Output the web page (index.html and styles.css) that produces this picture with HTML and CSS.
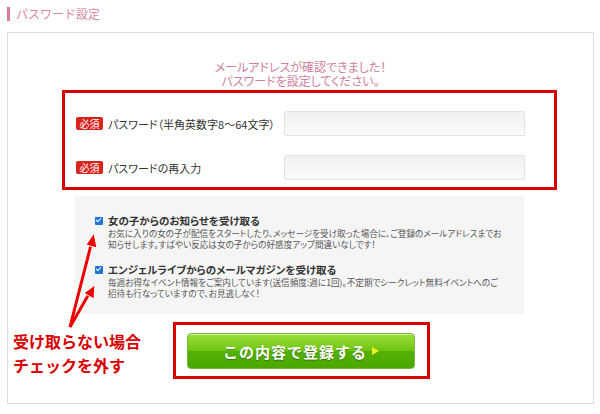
FILE: index.html
```html
<!DOCTYPE html>
<html lang="ja">

<head>
  <meta charset="UTF-8">
  <meta name="viewport" content="width=device-width, initial-scale=1.0">
  <title>パスワード設定</title>
  <link rel="stylesheet" href="styles.css">
</head>

<body>
  <div class="page">
    <h1 class="title">パスワード設定</h1>

    <div class="panel">
      <p class="lead">メールアドレスが確認できました！<br>パスワードを設定してください。</p>

      <div class="mark form-box">
        <div class="row">
          <label class="label"><span class="must">必須</span>パスワード（半角英数字8～64文字）</label>
          <input class="field" type="password">
        </div>
        <div class="row">
          <label class="label"><span class="must">必須</span>パスワードの再入力</label>
          <input class="field" type="password">
        </div>
      </div>

      <div class="notice">
        <div class="item">
          <p class="item-title"><span class="check"></span>女の子からのお知らせを受け取る</p>
          <p class="item-desc">お気に入りの女の子が配信をスタートしたり、メッセージを受け取った場合に、ご登録のメールアドレスまでお知らせします。すばやい反応は女の子からの好感度アップ間違いなしです！</p>
        </div>
        <div class="item">
          <p class="item-title"><span class="check"></span>エンジェルライブからのメールマガジンを受け取る</p>
          <p class="item-desc">毎週お得なイベント情報をご案内しています(送信頻度:週に1回)。不定期でシークレット無料イベントへのご招待も行なっていますので、お見逃しなく！</p>
        </div>
      </div>

      <div class="mark submit-box">
        <button class="submit" type="button">この内容で登録する<span class="tri"></span></button>
      </div>
    </div>

    <!-- 注釈 -->
    <p class="note">受け取らない場合<br>チェックを外す</p>
    <svg class="arrows" width="600" height="414" viewBox="0 0 600 414">
      <g stroke="#fff" stroke-width="5" stroke-linecap="round" fill="none">
        <line x1="70" y1="320" x2="92" y2="234" />
        <line x1="70" y1="320" x2="90" y2="285" />
      </g>
      <g stroke="#e00" stroke-width="3" fill="none">
        <line x1="70" y1="320" x2="92" y2="234" />
        <line x1="70" y1="320" x2="90" y2="285" />
      </g>
      <g fill="#e00" stroke="#fff" stroke-width="1">
        <polygon points="94,226 97,241 86,238" />
        <polygon points="95,278 94,292 84,286" />
      </g>
    </svg>
  </div>
</body>

</html>
```

FILE: styles.css
```css
body,
h1,
p {
  margin: 0;
  padding: 0;
}
body {
  font-family: "Noto Sans CJK JP", "Liberation Sans", sans-serif;
  color: #333;
  background: #fff;
}
.page {
  position: relative;
  width: 600px;
  height: 414px;
}
.title {
  margin: 7px 0 11px 7px;
  padding-left: 6px;
  border-left: 3px solid #e0789a;
  font-size: 12px;
  font-weight: normal;
  line-height: 14px;
  color: #d98aa6;
}
.panel {
  box-sizing: border-box;
  height: 372px;
  margin: 0 6px 0 7px;
  padding-top: 27px;
  border: 1px solid #ddd;
}
.lead {
  font-size: 12px;
  line-height: 14px;
  text-align: center;
  color: #d07f9d;
  font-feature-settings: "palt";
}
.mark {
  border: 3px solid #d90000;
}
.form-box {
  width: 495px;
  box-sizing: border-box;
  margin: 2px 0 0 54px;
  padding: 18px 0 7px 11px;
  display: flex;
  flex-direction: column;
  gap: 19px;
}
.row {
  display: flex;
  align-items: center;
}
.label {
  width: 208px;
  display: flex;
  align-items: center;
  font-size: 11px;
  color: #333;
  font-feature-settings: "palt";
}
.must {
  display: inline-block;
  width: 27px;
  height: 13px;
  margin-right: 5px;
  border-radius: 2px;
  background-color: #d8221c;
  color: #fff;
  font-size: 10px;
  line-height: 13px;
  text-align: center;
}
.field {
  box-sizing: border-box;
  width: 241px;
  height: 25px;
  margin: 0;
  border: 1px solid #e3e3e3;
  border-radius: 2px;
  background: linear-gradient(#f0f0f0, #fbfbfb);
}
.notice {
  box-sizing: border-box;
  width: 449px;
  height: 118px;
  margin: 6px 0 0 67px;
  padding: 18px 22px 0 20px;
  background-color: #f5f5f5;
  display: flex;
  flex-direction: column;
  gap: 14px;
}
.item-title {
  display: flex;
  align-items: center;
  font-size: 10.5px;
  font-weight: bold;
  line-height: 14px;
  color: #333;
  font-feature-settings: "palt";
}
.check {
  position: relative;
  width: 8px;
  height: 8px;
  margin-right: 5px;
  border-radius: 1px;
  background-color: #1f74d6;
}
.check::after {
  content: "";
  position: absolute;
  left: 2px;
  top: 0;
  width: 2px;
  height: 4px;
  border: solid #fff;
  border-width: 0 1px 1px 0;
  transform: rotate(45deg);
}
.item-desc {
  padding-left: 13px;
  font-size: 8.6px;
  line-height: 10.5px;
  color: #555;
  font-feature-settings: "palt";
}
.submit-box {
  box-sizing: border-box;
  width: 257px;
  margin: 8px 0 0 165px;
  padding: 8px 0 7px 11px;
}
.submit {
  box-sizing: border-box;
  width: 228px;
  height: 36px;
  border: 1px solid #78b83e;
  border-radius: 4px;
  background: linear-gradient(#9ede3a, #6cc512 50%, #55b004 51%, #4aa800);
  box-shadow: inset 0 1px 0 rgba(255, 255, 255, .5);
  color: #fff;
  font-family: "Noto Sans CJK JP", sans-serif;
  font-size: 15px;
  font-weight: bold;
  letter-spacing: 1px;
  text-shadow: 0 1px 1px rgba(0, 0, 0, .35);
  display: flex;
  align-items: center;
  justify-content: center;
  cursor: pointer;
}
.tri {
  width: 0;
  height: 0;
  margin-left: 5px;
  border-top: 4px solid transparent;
  border-bottom: 4px solid transparent;
  border-left: 7px solid #f2f01a;
}
.note {
  position: absolute;
  left: 13px;
  top: 322px;
  font-size: 16px;
  font-weight: bold;
  line-height: 24px;
  color: #d90000;
}
.arrows {
  position: absolute;
  left: 0;
  top: 0;
  pointer-events: none;
}
```
